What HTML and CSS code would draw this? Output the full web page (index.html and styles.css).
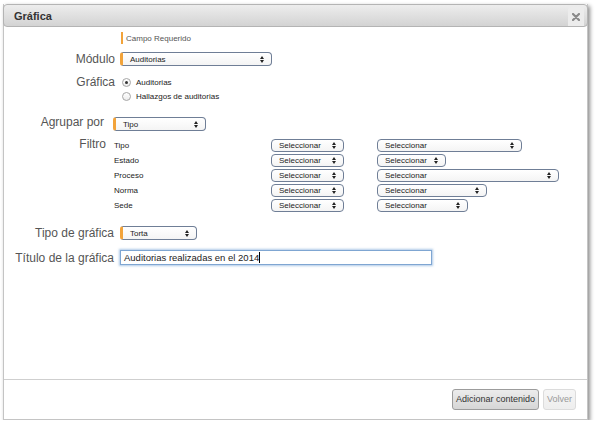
FILE: index.html
```html
<!DOCTYPE html>
<html lang="es">
<head>
    <meta charset="UTF-8">
    <title>Gráfica</title>
    <link rel="stylesheet" href="styles.css">
</head>
<body>
    <div class="dialog">
        <!-- Barra de título -->
        <div class="titlebar">
            <span class="title">Gráfica</span>
            <span class="close">
                <svg width="8" height="8" viewBox="0 0 8 8"><path d="M1 1L7 7M7 1L1 7" stroke="#8a8a8a" stroke-width="2.2" stroke-linecap="round"/></svg>
            </span>
        </div>

        <div class="content">
            <div class="required-note"><span class="req-bar"></span>Campo Requerido</div>

            <div class="row">
                <label class="label">Módulo</label>
                <div class="select required select-modulo"><span>Auditorias</span><span class="arrows"></span></div>
            </div>

            <div class="row row-top">
                <label class="label">Gráfica</label>
                <div class="radios">
                    <div class="radio-line"><span class="radio checked"></span>Auditorias</div>
                    <div class="radio-line"><span class="radio"></span>Hallazgos de auditorias</div>
                </div>
            </div>

            <div class="row row-agrupar">
                <label class="label">Agrupar por</label>
                <div class="select required select-agrupar"><span>Tipo</span><span class="arrows"></span></div>
            </div>

            <div class="row row-top row-filtro">
                <label class="label">Filtro</label>
                <div class="filters">
                    <div class="filter-row">
                        <span class="filter-name">Tipo</span>
                        <div class="select select-left"><span>Seleccionar</span><span class="arrows"></span></div>
                        <div class="select select-tipo"><span>Seleccionar</span><span class="arrows"></span></div>
                    </div>
                    <div class="filter-row">
                        <span class="filter-name">Estado</span>
                        <div class="select select-left"><span>Seleccionar</span><span class="arrows"></span></div>
                        <div class="select select-estado"><span>Seleccionar</span><span class="arrows"></span></div>
                    </div>
                    <div class="filter-row">
                        <span class="filter-name">Proceso</span>
                        <div class="select select-left"><span>Seleccionar</span><span class="arrows"></span></div>
                        <div class="select select-proceso"><span>Seleccionar</span><span class="arrows"></span></div>
                    </div>
                    <div class="filter-row">
                        <span class="filter-name">Norma</span>
                        <div class="select select-left"><span>Seleccionar</span><span class="arrows"></span></div>
                        <div class="select select-norma"><span>Seleccionar</span><span class="arrows"></span></div>
                    </div>
                    <div class="filter-row">
                        <span class="filter-name">Sede</span>
                        <div class="select select-left"><span>Seleccionar</span><span class="arrows"></span></div>
                        <div class="select select-sede"><span>Seleccionar</span><span class="arrows"></span></div>
                    </div>
                </div>
            </div>

            <div class="row row-tipo">
                <label class="label">Tipo de gráfica</label>
                <div class="select required select-torta"><span>Torta</span><span class="arrows"></span></div>
            </div>

            <div class="row row-titulo">
                <label class="label">Título de la gráfica</label>
                <div class="text-input">Auditorias realizadas en el 2014<span class="caret"></span></div>
            </div>
        </div>

        <!-- Pied -->
        <div class="footer">
            <button class="btn">Adicionar contenido</button>
            <button class="btn btn-disabled">Volver</button>
        </div>
    </div>
</body>
</html>
```

FILE: styles.css
```css
/* Styles généraux */
body {
    margin: 0;
    background-color: #ffffff;
    font-family: "Liberation Sans", Arial, sans-serif;
    color: #222;
}

/* Fenêtre */
.dialog {
    margin: 4px 0 0 3px;
    width: 585px;
    height: 416px;
    background-color: #fff;
    border: 1px solid #c4c4c4;
    border-top: none;
    box-shadow: 2px 2px 4px rgba(0, 0, 0, 0.45);
    display: flex;
    flex-direction: column;
    box-sizing: border-box;
}

/* Barre de titre */
.titlebar {
    height: 23px;
    margin: 0 -1px;
    box-sizing: border-box;
    border: 1px solid #b4b4b4;
    border-radius: 4px;
    background: linear-gradient(#ededed, #d3d3d3);
    display: flex;
    align-items: center;
    justify-content: space-between;
    padding-left: 10px;
}
.title {
    font-size: 11px;
    font-weight: bold;
    color: #333;
}
.close {
    align-self: flex-end;
    width: 16px;
    height: 19px;
    margin-right: 3px;
    background-color: #ececec;
    border-radius: 3px 3px 0 0;
    display: flex;
    align-items: center;
    justify-content: center;
}

/* Contenu */
.content {
    flex: 1;
    padding-top: 5px;
}
.required-note {
    display: flex;
    align-items: center;
    margin-left: 117px;
    font-size: 8px;
    color: #555;
    height: 12px;
}
.req-bar {
    width: 2px;
    height: 12px;
    background-color: #f2a33a;
    margin-right: 3px;
}

.row {
    display: flex;
    align-items: center;
    gap: 5px;
    margin-top: 8px;
}
.row-top {
    align-items: flex-start;
    margin-top: 9px;
}
.label {
    width: 111px;
    text-align: right;
    font-size: 12px;
    color: #555;
    flex-shrink: 0;
}
.row-agrupar {
    margin-top: 14px;
    gap: 9px;
}
.row-agrupar .label {
    width: 100px;
    position: relative;
    top: -2px;
}
.row-filtro {
    margin-top: 7px;
    gap: 8px;
}
.row-filtro .label {
    width: 102px;
    line-height: 13px;
}
.row-tipo {
    margin-top: 13px;
    gap: 6px;
}
.row-tipo .label,
.row-titulo .label {
    width: 110px;
}
.row-titulo {
    margin-top: 10px;
    gap: 6px;
}

/* Listes déroulantes */
.select {
    height: 13px;
    box-sizing: border-box;
    border: 1px solid #6f7e96;
    border-radius: 4px;
    background: linear-gradient(#ffffff, #f4f4f4);
    display: flex;
    align-items: center;
    justify-content: space-between;
    padding: 0 7px 0 7px;
    font-size: 8px;
    color: #222;
}
.select.required {
    border-left: 3px solid #f2a33a;
    border-radius: 3px 4px 4px 3px;
    padding-left: 7px;
    height: 14px;
}
/* Flèches haut / bas */
.arrows {
    display: flex;
    flex-direction: column;
    gap: 1px;
}
.arrows::before,
.arrows::after {
    content: "";
    border-left: 2px solid transparent;
    border-right: 2px solid transparent;
}
.arrows::before {
    border-bottom: 3px solid #222;
}
.arrows::after {
    border-top: 3px solid #222;
}
.select-modulo { width: 152px; }
.select-agrupar { width: 93px; }
.select-torta { width: 77px; }
.select-left { width: 73px; }
.select-tipo { width: 145px; }
.select-estado { width: 69px; }
.select-proceso { width: 182px; }
.select-norma { width: 110px; }
.select-sede { width: 91px; }

/* Boutons radio */
.radios {
    display: flex;
    flex-direction: column;
    padding-left: 2px;
    margin-top: 0;
}
.radio-line {
    display: flex;
    align-items: center;
    height: 14px;
    font-size: 8px;
    color: #222;
}
.radio {
    width: 9px;
    height: 9px;
    box-sizing: border-box;
    border: 1px solid #a6a6a6;
    border-radius: 50%;
    background: linear-gradient(#ffffff, #ececec);
    margin-right: 5px;
    display: flex;
    align-items: center;
    justify-content: center;
}
.radio.checked::after {
    content: "";
    width: 3px;
    height: 3px;
    border-radius: 50%;
    background-color: #333;
}

/* Filtres */
.filters {
    display: flex;
    flex-direction: column;
}
.filter-row {
    display: flex;
    align-items: center;
    height: 15px;
}
.filter-name {
    width: 157px;
    font-size: 8px;
    color: #222;
}
.filter-row .select-left {
    margin-right: 33px;
}

/* Champ texte */
.text-input {
    width: 312px;
    height: 15px;
    box-sizing: border-box;
    border: 1px solid #7fa6d2;
    box-shadow: 0 0 2px 1px rgba(120, 165, 215, 0.6);
    font-size: 9.5px;
    padding-left: 3px;
    display: flex;
    align-items: center;
    color: #222;
}
.caret {
    width: 1px;
    height: 11px;
    background-color: #000;
}

/* Pied */
.footer {
    height: 40px;
    border-top: 1px solid #cfcfcf;
    display: flex;
    justify-content: flex-end;
    align-items: center;
    gap: 4px;
    padding-right: 11px;
    box-sizing: border-box;
    padding-bottom: 1px;
}
.btn {
    height: 21px;
    padding: 0 3px;
    font-family: "Liberation Sans", Arial, sans-serif;
    font-size: 9px;
    color: #333;
    border: 1px solid #9c9c9c;
    border-radius: 3px;
    background: linear-gradient(#ececec, #d6d6d6);
}
.btn-disabled {
    color: #999;
    border-color: #dcdcdc;
    background: linear-gradient(#f6f6f6, #eeeeee);
}
```
